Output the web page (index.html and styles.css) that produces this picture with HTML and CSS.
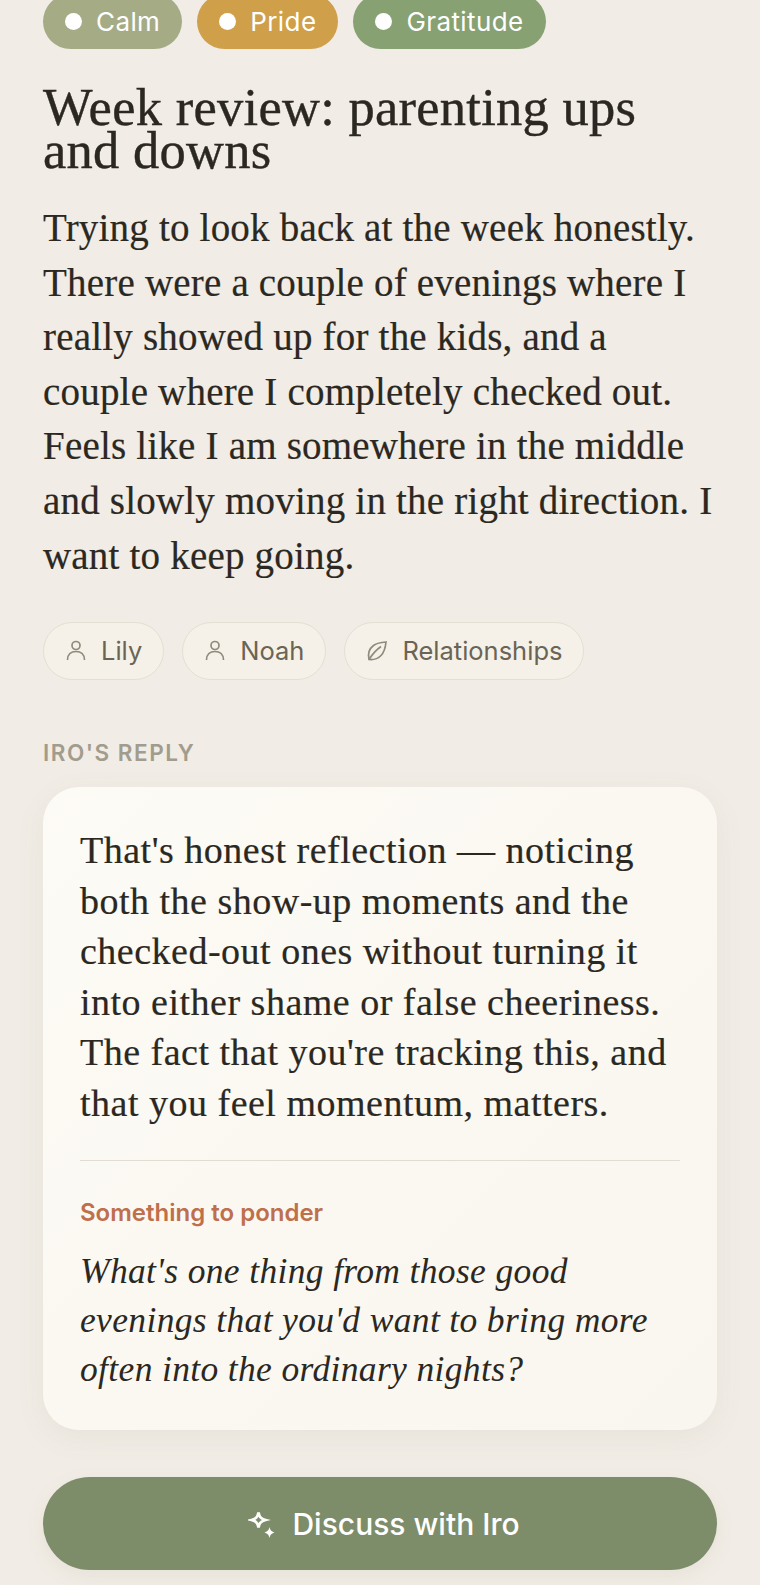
FILE: index.html
```html
<!DOCTYPE html>
<html lang="en">
<head>
  <meta charset="UTF-8" />
  <title>Week review</title>
  <link rel="stylesheet" href="styles.css">
</head>
<body>
  <main class="entry">
    <div class="moods">
      <span class="mood calm"><i class="dot"></i>Calm</span>
      <span class="mood pride"><i class="dot"></i>Pride</span>
      <span class="mood gratitude"><i class="dot"></i>Gratitude</span>
    </div>

    <h1>Week review: parenting ups<br>and downs</h1>
    <p class="body-text">Trying to look back at the week honestly.<br>There were a couple of evenings where I<br>really showed up for the kids, and a<br>couple where I completely checked out.<br>Feels like I am somewhere in the middle<br>and slowly moving in the right direction. I<br>want to keep going.</p>

    <div class="tags">
      <span class="tag">
        <svg viewBox="0 0 24 24"><circle cx="12" cy="7.500" r="4"/><path d="M3.500 22c0-5.500 3.500-8.500 8.500-8.500s8.500 3 8.500 8.500"/></svg>
        Lily
      </span>
      <span class="tag">
        <svg viewBox="0 0 24 24"><circle cx="12" cy="7.500" r="4"/><path d="M3.500 22c0-5.500 3.500-8.500 8.500-8.500s8.500 3 8.500 8.500"/></svg>
        Noah
      </span>
      <span class="tag">
        <svg viewBox="0 0 24 24"><path d="M4 21.500c-1.500-6.500.5-11 4.500-14 3.500-2.500 8-3.200 12.500-3.500-.5 5-1.500 10-5 13.500-3.500 3.500-8 4.500-12 4z"/><path d="M4 21.500C7.500 16 11 12 16 8.500"/></svg>
        Relationships
      </span>
    </div>

    <div class="label">IRO'S REPLY</div>
    <section class="reply">
      <p class="reply-text">That's honest reflection — noticing<br>both the show-up moments and the<br>checked-out ones without turning it<br>into either shame or false cheeriness.<br>The fact that you're tracking this, and<br>that you feel momentum, matters.</p>
      <hr>
      <div class="ponder-title">Something to ponder</div>
      <p class="ponder">What's one thing from those good<br>evenings that you'd want to bring more<br>often into the ordinary nights?</p>
    </section>

    <button class="discuss">
      <svg viewBox="0 0 28 28"><path d="M10.500 2.500c.8 4.400 2.200 6.200 7 7.500-4.800 1.300-6.200 3.100-7 7.500-.8-4.400-2.200-6.200-7-7.500 4.800-1.300 6.200-3.100 7-7.500z"/><path class="solid" d="M21.500 17c.7 3.100 1.600 4.200 5 5.500-3.400 1.300-4.300 2.400-5 5.500-.7-3.100-1.600-4.200-5-5.500 3.400-1.300 4.300-2.400 5-5.500z"/></svg>
      Discuss with Iro
    </button>
  </main>
</body>
</html>
```

FILE: styles.css
```css
html, body {
  margin: 0;
  padding: 0;
}
body {
  background: #f1ece5;
  color: #2b2822;
  font-family: 'Liberation Serif', serif;
  height: 1585px;
  overflow: hidden;
}
.entry {
  padding: 0 43px;
}
.moods {
  display: flex;
  gap: 15px;
  margin-top: -6px;
}
.mood {
  display: flex;
  align-items: center;
  gap: 14px;
  height: 55px;
  padding: 0 22px;
  border-radius: 28px;
  color: #fff;
  font-family: 'Inter', sans-serif;
  font-size: 26px;
  letter-spacing: 0.4px;
}
.dot {
  width: 17px;
  height: 17px;
  border-radius: 50%;
  background: #fff;
}
.calm { background: #a5ac85; }
.pride { background: #cf9f4a; }
.gratitude { background: #88a172; }
h1 {
  margin: 37px 0 0 0;
  font-size: 52.500px;
  line-height: 43px;
  font-weight: 400;
  letter-spacing: 0.27px;
  -webkit-text-stroke: 0.4px #2b2822;
}
.body-text {
  margin: 29px 0 0 0;
  font-size: 39px;
  line-height: 54.600px;
  letter-spacing: 0.2px;
  -webkit-text-stroke: 0.2px #2b2822;
}
.tags {
  display: flex;
  gap: 18px;
  margin-top: 39px;
}
.tag {
  display: flex;
  align-items: center;
  gap: 13px;
  height: 54px;
  padding: 0 21px 2px 20px;
  background: #f5f1e8;
  border: 1px solid #e4dfd3;
  border-radius: 29px;
  color: #6b6455;
  font-family: 'Inter', sans-serif;
  font-size: 25.500px;
}
.tag svg {
  width: 24px;
  height: 24px;
  fill: none;
  stroke: #8f8a7c;
  stroke-width: 1.700;
}
.label {
  margin-top: 59px;
  color: #a19c8d;
  font-family: 'Inter', sans-serif;
  font-size: 22.500px;
  font-weight: 600;
  letter-spacing: 1.500px;
  line-height: 28px;
}
.reply {
  margin-top: 20px;
  padding: 38px 37px 36px 37px;
  background: linear-gradient(135deg, #fdfbf5, #f9f5ef);
  border-radius: 36px;
  box-shadow: 0 8px 30px rgba(120, 110, 80, 0.07);
}
.reply-text {
  margin: 0;
  font-size: 38px;
  line-height: 50.500px;
  letter-spacing: 0.5px;
  -webkit-text-stroke: 0.2px #2b2822;
}
hr {
  border: none;
  border-top: 1px solid #e2ddd2;
  margin: 32px 0 0 0;
}
.ponder-title {
  margin-top: 37px;
  color: #bf6f4c;
  font-family: 'Inter', sans-serif;
  font-size: 24px;
  font-weight: 600;
  line-height: 30px;
}
.ponder {
  margin: 19px 0 0 0;
  font-size: 35.500px;
  line-height: 49px;
  font-style: italic;
  letter-spacing: 0.35px;
}
.discuss {
  display: flex;
  align-items: center;
  justify-content: center;
  gap: 16px;
  width: 100%;
  height: 93px;
  margin-top: 47px;
  padding: 0 0 0 8px;
  border: none;
  border-radius: 47px;
  background: #7d8d69;
  color: #fff;
  font-family: 'Inter', sans-serif;
  font-size: 30px;
  font-weight: 500;
  box-shadow: 0 6px 20px rgba(120, 110, 80, 0.08);
}
.discuss svg {
  width: 28px;
  height: 28px;
  fill: none;
  stroke: #fff;
  stroke-width: 2.800;
}
.discuss svg .solid {
  fill: #fff;
  stroke: none;
}
```
